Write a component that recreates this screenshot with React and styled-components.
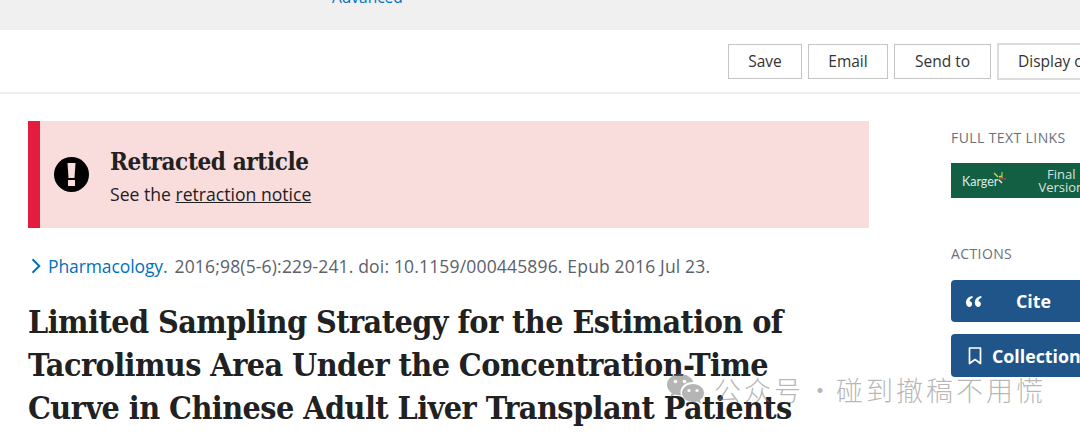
import styled, { createGlobalStyle } from 'styled-components';

const GlobalStyle = createGlobalStyle`
  html, body {
    margin: 0;
    padding: 0;
    background: #fff;
    overflow: hidden;
  }
`;

const sans = `"Open Sans", "Noto Sans", sans-serif`;
const serif = `"DejaVu Serif", "Liberation Serif", serif`;

const Page = styled.div`
  position: relative;
  width: 1080px;
  height: 435px;
  overflow: hidden;
  font-family: ${sans};
`;

const SearchBar = styled.div`
  height: 30px;
  background: #f0f0f0;
  padding-left: 332px;
  overflow: hidden;
`;

const AdvancedLink = styled.a`
  display: block;
  margin-top: -13px;
  font-size: 15.5px;
  line-height: 20px;
  color: #0071bc;
`;

const Toolbar = styled.div`
  height: 62px;
  border-bottom: 2px solid #eeeeee;
  display: flex;
  align-items: center;
  gap: 6px;
  padding-left: 728px;
`;

const ToolButton = styled.button`
  flex: none;
  width: ${(p) => p.$width}px;
  height: ${(p) => (p.$clip ? 37 : 35)}px;
  box-sizing: border-box;
  background: #fff;
  border: ${(p) => (p.$clip ? '2px solid #dcdcdc' : '1px solid #c4c4c4')};
  font-family: ${sans};
  font-size: 15.5px;
  color: #333;
  white-space: nowrap;
  text-align: ${(p) => (p.$clip ? 'left' : 'center')};
  padding: 0 0 0 ${(p) => (p.$clip ? '19px' : '0')};
`;

const Body = styled.div`
  display: flex;
  padding: 27px 0 0 28px;
`;

const Main = styled.main`
  flex: none;
  width: 841px;
`;

const Banner = styled.section`
  box-sizing: border-box;
  height: 107px;
  display: flex;
  align-items: center;
  gap: 21px;
  background: #f9dcdc;
  border-left: 12px solid #e51c3e;
  padding-left: 14px;
`;

const BannerBody = styled.div`
  margin-top: 3px;
`;

const BannerTitle = styled.h2`
  margin: 0 0 7px;
  font-family: ${serif};
  font-stretch: condensed;
  font-size: 24px;
  line-height: 28px;
  font-weight: 700;
  letter-spacing: -0.38px;
  color: #212121;
`;

const BannerText = styled.p`
  margin: 0;
  font-size: 17.6px;
  line-height: 22px;
  color: #212121;

  a {
    color: inherit;
    text-decoration: underline;
  }
`;

const Citation = styled.div`
  display: flex;
  align-items: center;
  margin-top: 26px;
  font-size: 17.5px;
  line-height: 24px;
  letter-spacing: 0.17px;
  color: #5b616b;
  white-space: nowrap;

  a {
    color: #0071bc;
    margin-right: 7px;
    letter-spacing: -0.1px;
  }
`;

const Chevron = styled.svg`
  flex: none;
  margin: 0 7px 0 3px;
`;

const Title = styled.h1`
  margin: 23px 0 0;
  width: 775px;
  font-family: ${serif};
  font-stretch: condensed;
  font-size: 32px;
  line-height: 43px;
  font-weight: 700;
  letter-spacing: -0.55px;
  color: #212121;
`;

const Side = styled.aside`
  flex: none;
  margin-left: 82px;
  width: 129px;
  padding-top: 7px;
  overflow: hidden;
`;

const SideHeading = styled.h3`
  margin: 0;
  font-size: 14px;
  line-height: 20px;
  font-weight: 400;
  color: #6b7079;
  white-space: nowrap;
  letter-spacing: 0.4px;
`;

const KargerLink = styled.a`
  display: flex;
  align-items: center;
  margin: 15px 0 46px;
  width: 160px;
  height: 35px;
  background: #125f43;
  color: #d5e5dd;
`;

const KargerName = styled.span`
  margin: 2px 0 0 11px;
  font-family: "Lato", sans-serif;
  font-size: 12.5px;
  color: #dde9e3;
`;

const KargerVersion = styled.span`
  margin-left: 31px;
  font-size: 13px;
  line-height: 13px;
  text-align: center;
`;

const KargerGlyph = styled.svg`
  flex: none;
  margin-left: -5px;
  margin-top: -6px;
`;

const ActionButton = styled.button`
  display: flex;
  align-items: center;
  flex: none;
  width: 160px;
  height: ${(p) => p.$height}px;
  margin-top: ${(p) => p.$top}px;
  padding: 0 0 0 ${(p) => p.$pad}px;
  border: 0;
  border-radius: 4px;
  background: #20558a;
  color: #fff;
  font-family: ${sans};
  font-size: 17.8px;
  font-weight: 700;
  white-space: nowrap;
`;

const ActionLabel = styled.span`
  margin-left: ${(p) => p.$gap}px;
`;

const Watermark = styled.div`
  position: absolute;
  left: 666px;
  top: 371px;
  display: flex;
  align-items: center;
  height: 36px;
  color: rgba(120, 120, 120, 0.55);
  font-family: "Noto Sans CJK SC", sans-serif;
  font-size: 27px;
  font-weight: 300;
  letter-spacing: 3px;
  white-space: nowrap;
`;

const WatermarkDot = styled.span`
  width: 32px;
  text-align: center;
  letter-spacing: 0;
`;

const WatermarkGlyph = styled.svg`
  flex: none;
  margin-right: 8px;
`;

const AlertIcon = () => (
  <svg width="35" height="35" viewBox="0 0 35 35" aria-hidden="true">
    <circle cx="17.5" cy="17.5" r="17.5" fill="#000" />
    <path d="M13.5 6h8l-1 15h-6Z" fill="#f9dcdc" />
    <rect x="14" y="23" width="7" height="6" fill="#f9dcdc" />
  </svg>
);

const ChevronIcon = () => (
  <Chevron width="10" height="16" viewBox="0 0 10 16" fill="none" stroke="#0071bc" strokeWidth="2" aria-hidden="true">
    <path d="M1.5 1.2 8.3 8l-6.8 6.8" />
  </Chevron>
);

const QuoteIcon = () => (
  <svg width="17" height="13" viewBox="0 0 17 13" fill="#fff" aria-hidden="true">
    <path d="M7.4 1C4 1.6 1 3.6 1 7.6 1 10.4 2.4 12 4.2 12c1.6 0 2.9-1.2 2.9-2.9 0-1.6-1-2.7-2.5-2.8C4.8 4.6 6 3.4 7.8 2.8Z" />
    <path d="M16.2 1c-3.4.6-6.4 2.6-6.4 6.6 0 2.8 1.4 4.4 3.2 4.4 1.6 0 2.9-1.2 2.9-2.9 0-1.6-1-2.7-2.5-2.8.2-1.7 1.4-2.9 3.2-3.5Z" />
  </svg>
);

const BookmarkIcon = () => (
  <svg width="14" height="18" viewBox="0 0 14 18" fill="none" stroke="#fff" strokeWidth="1.7" aria-hidden="true">
    <path d="M1.5 1h11v15.5L7 12.5l-5.5 4Z" strokeLinejoin="round" />
  </svg>
);

const KargerMark = () => (
  <KargerGlyph width="14" height="14" viewBox="0 0 14 14" fill="none" strokeWidth="1.4" aria-hidden="true">
    <path d="M1 2l4 4" stroke="#c9d84a" />
    <path d="M6 6l3-1" stroke="#c9d84a" />
    <path d="M9 1v6" stroke="#8cc63f" />
    <path d="M6 8h7" stroke="#c8353f" />
    <path d="M6 9l3 3" stroke="#e7f0ea" />
  </KargerGlyph>
);

const WeChatIcon = () => (
  <WatermarkGlyph width="40" height="32" viewBox="0 0 40 32" aria-hidden="true">
    <path fill="rgba(120,120,120,0.55)" d="M14 1C6.8 1 1 5.8 1 11.8c0 3.3 1.8 6.2 4.6 8.2L4.4 24l4.6-2.4c1.6.5 3.3.8 5 .8h1c-.3-1-.5-2-.5-3 0-5.8 5.4-10.4 12-10.4h.8C25.8 4.4 20.4 1 14 1Z" />
    <path fill="rgba(120,120,120,0.55)" d="M27 11c-6 0-11 4-11 9s5 9 11 9c1.4 0 2.8-.2 4-.6l4 2.1-1-3.4c2.4-1.6 4-4.2 4-7.1 0-5-5-9-11-9Z" />
    <circle cx="9.5" cy="8.5" r="1.8" fill="#fff" />
    <circle cx="18.5" cy="8.5" r="1.8" fill="#fff" />
    <circle cx="23" cy="17.5" r="1.6" fill="#fff" />
    <circle cx="31" cy="17.5" r="1.6" fill="#fff" />
  </WatermarkGlyph>
);

const App = () => (
  <Page>
    <GlobalStyle />
    <SearchBar>
      <AdvancedLink>Advanced</AdvancedLink>
    </SearchBar>
    <Toolbar>
      <ToolButton $width={74}>Save</ToolButton>
      <ToolButton $width={80}>Email</ToolButton>
      <ToolButton $width={97}>Send to</ToolButton>
      <ToolButton $width={120} $clip>Display options</ToolButton>
    </Toolbar>
    <Body>
      <Main>
        <Banner>
          <AlertIcon />
          <BannerBody>
            <BannerTitle>Retracted article</BannerTitle>
            <BannerText>
              See the <a>retraction notice</a>
            </BannerText>
          </BannerBody>
        </Banner>
        <Citation>
          <ChevronIcon />
          <a>Pharmacology.</a>
          2016;98(5-6):229-241. doi: 10.1159/000445896. Epub 2016 Jul 23.
        </Citation>
        <Title>
          Limited Sampling Strategy for the Estimation of Tacrolimus Area Under the
          Concentration-Time Curve in Chinese Adult Liver Transplant Patients
        </Title>
      </Main>
      <Side>
        <SideHeading>FULL TEXT LINKS</SideHeading>
        <KargerLink>
          <KargerName>Karger</KargerName>
          <KargerMark />
          <KargerVersion>Final<br />Version</KargerVersion>
        </KargerLink>
        <SideHeading>ACTIONS</SideHeading>
        <ActionButton $top={16} $height={42} $pad={14}>
          <QuoteIcon />
          <ActionLabel $gap={34}>Cite</ActionLabel>
        </ActionButton>
        <ActionButton $top={12} $height={43} $pad={17}>
          <BookmarkIcon />
          <ActionLabel $gap={10}>Collections</ActionLabel>
        </ActionButton>
      </Side>
    </Body>
    <Watermark>
      <WeChatIcon />
      公众号<WatermarkDot>·</WatermarkDot>碰到撤稿不用慌
    </Watermark>
  </Page>
);

export default App;
